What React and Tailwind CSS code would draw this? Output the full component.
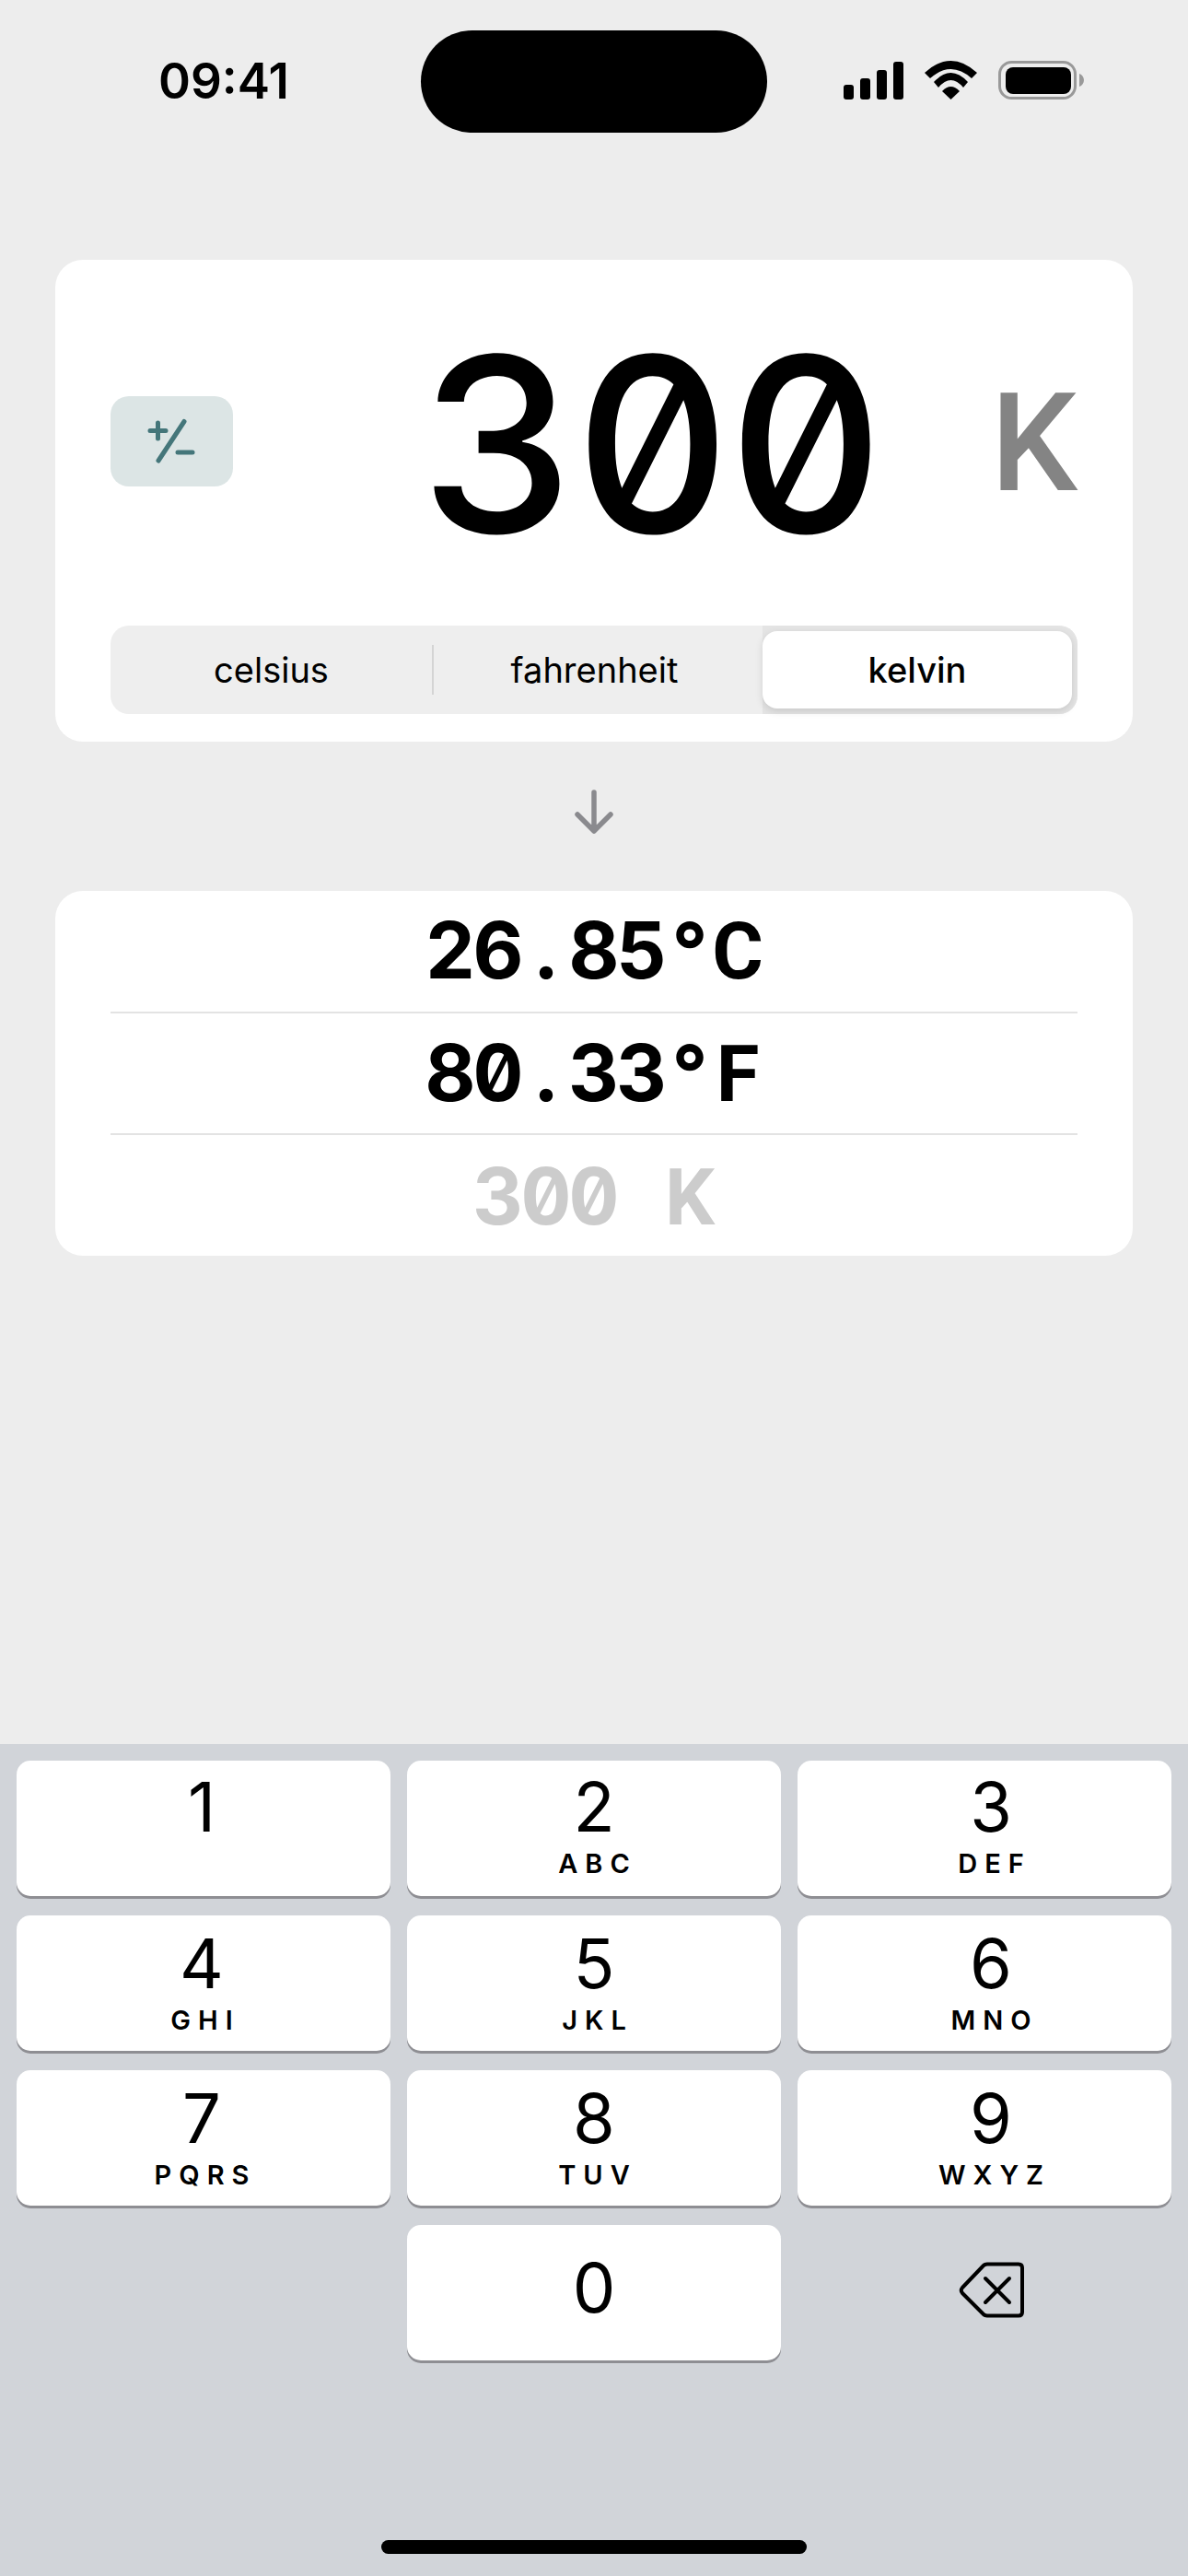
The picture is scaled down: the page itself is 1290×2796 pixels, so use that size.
const numFont = "font-['Inter',sans-serif] slashed-zero tabular-nums";
const letterFont = "font-['Roboto',sans-serif]";

const StatusBar = () => (
  <div className="grid grid-cols-[457px_376px_1fr] items-center h-[111px] mt-[33px]">
    <div className="pl-[172px] text-[53px] leading-none font-semibold text-black">09:41</div>
    <div className="h-[111px] rounded-full bg-black" />
    <div className="flex items-center pl-[83px] mb-[3px]">
      <svg width="262" height="43" viewBox="0 0 262 43">
        <rect x="0" y="26" width="11" height="16" rx="3" fill="#000" />
        <rect x="18" y="19" width="11" height="23" rx="3" fill="#000" />
        <rect x="36" y="10" width="11" height="32" rx="3" fill="#000" />
        <rect x="54" y="1" width="11" height="41" rx="3" fill="#000" />
        <path d="M88 13 Q116.5 -13 145 13 L139 19 Q116.5 -1 94 19 Z" fill="#000" />
        <path d="M98 23 Q116.5 3 135 23 L130 29 Q116.5 13 103 29 Z" fill="#000" />
        <path d="M107 33 Q116.5 23 126 33 L116.5 42 Z" fill="#000" />
        <rect x="169.5" y="1.5" width="82" height="39" rx="13" fill="none" stroke="#999" strokeWidth="3" />
        <rect x="176" y="7" width="71" height="29" rx="8" fill="#000" />
        <path d="M256 14 C259 15 261 18 261 21 C261 24 259 27 256 28 Z" fill="#999" />
      </svg>
    </div>
  </div>
);

// fixed cells so the characters stay on a mono grid; capitals come from Roboto, Inter's are too wide
const Mono = ({ text, cell, className }) => (
  <div className={`flex items-baseline ${numFont} ${className}`}>
    {text.split("").map((c, i) => (
      <span
        key={i}
        className={`flex justify-center ${/[A-Z]/.test(c) ? letterFont : ""}`}
        style={{ width: cell }}
      >
        {c === " " ? "\u00a0" : c}
      </span>
    ))}
  </div>
);

const Segment = () => (
  <div className="flex items-center h-[96px] rounded-[20px] bg-[#eeeeee] text-[38px] leading-none text-black">
    <div className="w-[349px] text-center">celsius</div>
    <div className="w-[2px] h-[54px] bg-[#d4d4d4]" />
    <div className="w-[357px] pr-[8px] text-center">fahrenheit</div>
    <div className="flex-1 h-[96px] py-[6px] pr-[6px] rounded-r-[20px] bg-[#e4e4e4]">
      <div className="flex items-center justify-center h-[84px] rounded-[16px] bg-white font-medium shadow-[0_3px_8px_rgba(0,0,0,0.12)]">
        kelvin
      </div>
    </div>
  </div>
);

const Results = () => (
  <div className="mx-[60px] mt-[162px] h-[396px] rounded-[30px] bg-white px-[60px] flex flex-col">
    <div className="flex items-center justify-center h-[133px] border-b-2 border-[#e3e3e3]">
      <Mono text="26.85°C" cell={52} className="text-[85px] leading-none font-bold text-black" />
    </div>
    <div className="flex items-center justify-center h-[132px] border-b-2 border-[#e3e3e3]">
      <Mono text="80.33°F" cell={52} className="text-[85px] leading-none font-bold text-black" />
    </div>
    <div className="flex items-center justify-center flex-1 pt-[3px]">
      <Mono text="300 K" cell={52} className="text-[85px] leading-none font-bold text-[#cccccc]" />
    </div>
  </div>
);

const keys = [
  ["1", "", "pt-[14px] pr-[4px]"],
  ["2", "ABC", "pt-[14px]"],
  ["3", "DEF", "pt-[14px] pl-[14px]"],
  ["4", "GHI", "pt-[16px] pr-[4px]"],
  ["5", "JKL", "pt-[16px]"],
  ["6", "MNO", "pt-[16px] pl-[14px]"],
  ["7", "PQRS", "pt-[16px] pr-[4px]"],
  ["8", "TUV", "pt-[16px]"],
  ["9", "WXYZ", "pt-[16px] pl-[14px]"],
];

const Key = ({ num, letters, className }) => (
  <div className={`flex flex-col items-center h-[147px] rounded-[15px] bg-white shadow-[0_3px_0_#8e8e93] ${className}`}>
    <div className="text-[74px] leading-[72px] text-black">{num}</div>
    {letters && (
      <div className="mt-[11px] mr-[-8px] text-[29px] leading-none font-semibold tracking-[8px] text-black">
        {letters}
      </div>
    )}
  </div>
);

const Keyboard = () => (
  <div className="flex flex-col flex-1 mt-[530px] bg-[#d1d4d9] px-[18px] pt-[18px]">
    <div className="grid grid-cols-3 gap-x-[18px] gap-y-[21px]">
      {keys.map(([num, letters, cls]) => (
        <Key key={num} num={num} letters={letters} className={cls} />
      ))}
      <div />
      <Key num="0" className="pt-[32px]" />
      <div className="flex items-center justify-center pl-[15px] pb-[6px]">
        <svg width="71" height="61" viewBox="0 0 71 61" fill="none" stroke="#000" strokeWidth="4" strokeLinecap="round" strokeLinejoin="round">
          <path d="M31 2.5 H65 Q69 2.5 69 6.5 V54.5 Q69 58.5 65 58.5 H31 Q28 58.5 26 56 L4 34 Q1.5 31 4 28 L26 5 Q28 2.5 31 2.5 Z" />
          <path d="M29 18 L55 44 M55 18 L29 44" />
        </svg>
      </div>
    </div>
    <div className="mt-auto mb-[24px] mx-auto w-[462px] h-[15px] rounded-full bg-black" />
  </div>
);

const App = () => (
  <div className="flex flex-col w-[1290px] h-[2796px] bg-[#ededed] font-['Inter',sans-serif]">
    <StatusBar />
    <div className="mx-[60px] mt-[138px] h-[523px] rounded-[30px] bg-white px-[60px]">
      <div className="flex items-center h-[394px] mb-[3px]">
        <div className="w-[133px] h-[98px] rounded-[20px] bg-[#dce5e5]">
          <svg width="133" height="98" viewBox="0 0 133 98" fill="none" stroke="#44767a" strokeWidth="5" strokeLinecap="round">
            <path d="M43 37.5 H60 M51.5 29 V46" />
            <path d="M80 27.5 L52 70" />
            <path d="M73 61 H89" />
          </svg>
        </div>
        <Mono text="300" cell={166.5} className="ml-[206px] pt-[6px] text-[264px] leading-none font-[550] text-black" />
        <div className="ml-auto pt-[5px] font-['Roboto',sans-serif] text-[149px] leading-none font-medium text-[#848484]">K</div>
      </div>
      <Segment />
    </div>
    <div className="flex justify-center h-0">
      <svg className="mt-[52px] shrink-0" width="42" height="48" viewBox="0 0 42 48" fill="none" stroke="#8a8a8e" strokeWidth="5.5" strokeLinecap="round" strokeLinejoin="round">
        <path d="M21 3 V45 M3 27 L21 45 L39 27" />
      </svg>
    </div>
    <Results />
    <Keyboard />
  </div>
);

export default App;
